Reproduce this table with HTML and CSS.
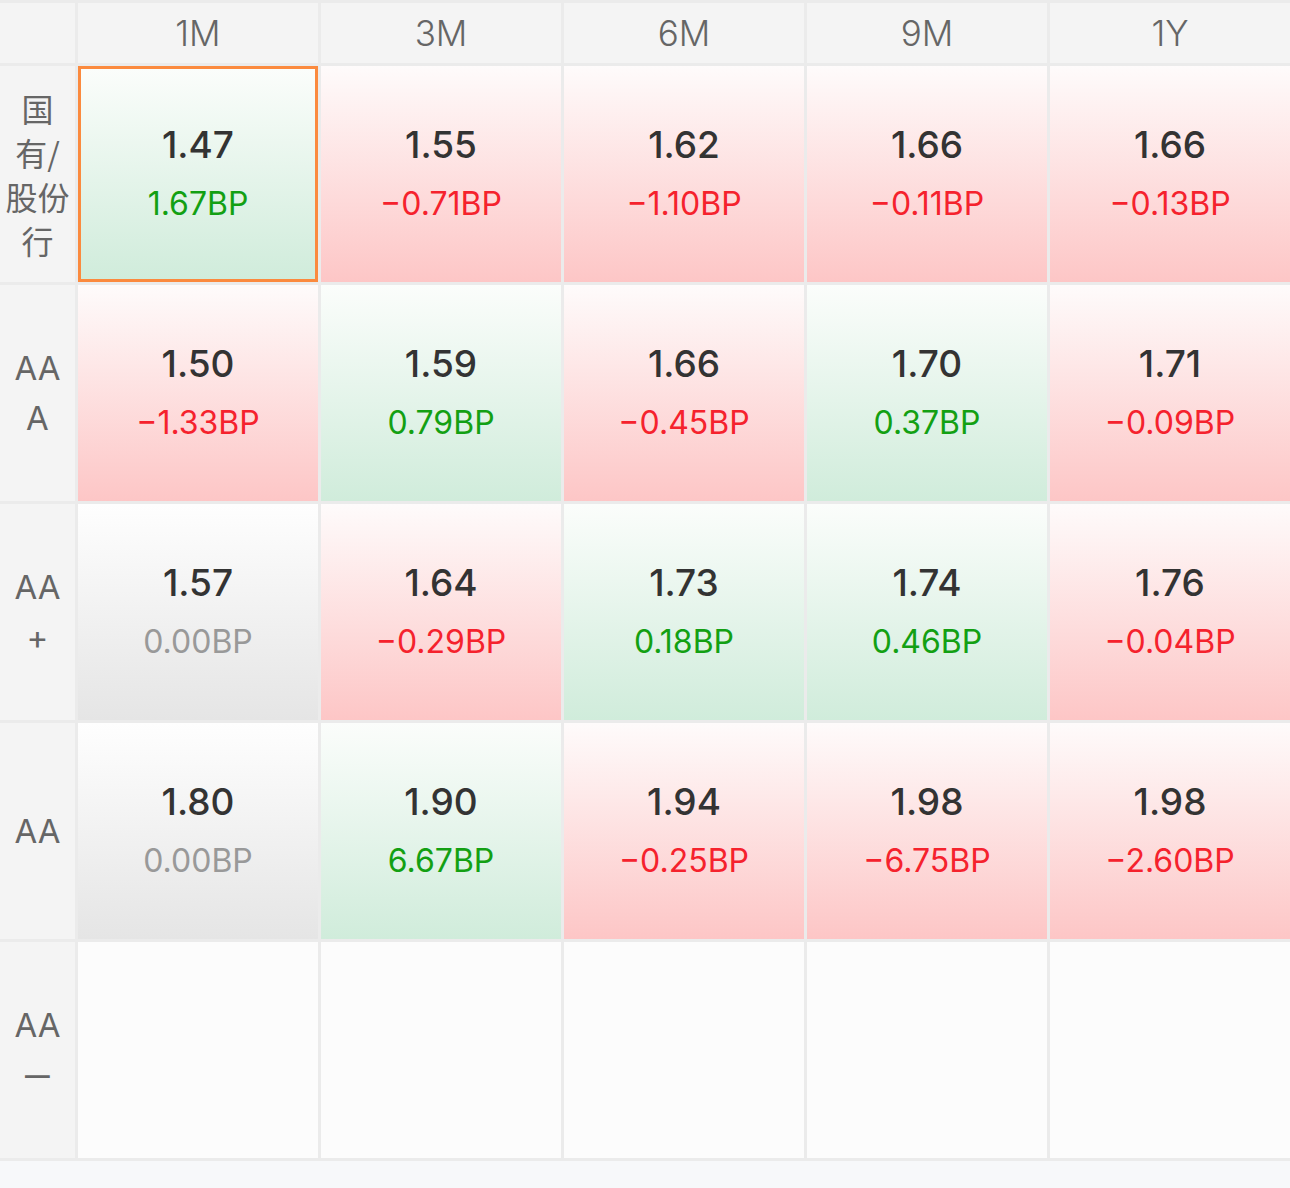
FILE: index.html
```html
<!DOCTYPE html>
<html lang="zh-CN">
<head>
    <meta charset="UTF-8">
    <meta name="viewport" content="width=device-width, initial-scale=1.0">
    <link rel="stylesheet" href="styles.css">
</head>
<body>
    <div class="matrix">
        <div class="corner"></div>
        <div class="head">1M</div>
        <div class="head">3M</div>
        <div class="head">6M</div>
        <div class="head">9M</div>
        <div class="head">1Y</div>

        <div class="label cjk"><div>国<br>有/<br>股份<br>行</div></div>
        <div class="cell up selected"><span class="rate">1.47</span><span class="bp green">1.67BP</span></div>
        <div class="cell down"><span class="rate">1.55</span><span class="bp red">−0.71BP</span></div>
        <div class="cell down"><span class="rate">1.62</span><span class="bp red">−1.10BP</span></div>
        <div class="cell down"><span class="rate">1.66</span><span class="bp red">−0.11BP</span></div>
        <div class="cell down"><span class="rate">1.66</span><span class="bp red">−0.13BP</span></div>

        <div class="label"><div>AA<br>A</div></div>
        <div class="cell down"><span class="rate">1.50</span><span class="bp red">−1.33BP</span></div>
        <div class="cell up"><span class="rate">1.59</span><span class="bp green">0.79BP</span></div>
        <div class="cell down"><span class="rate">1.66</span><span class="bp red">−0.45BP</span></div>
        <div class="cell up"><span class="rate">1.70</span><span class="bp green">0.37BP</span></div>
        <div class="cell down"><span class="rate">1.71</span><span class="bp red">−0.09BP</span></div>

        <div class="label"><div>AA<br>+</div></div>
        <div class="cell flat"><span class="rate">1.57</span><span class="bp gray">0.00BP</span></div>
        <div class="cell down"><span class="rate">1.64</span><span class="bp red">−0.29BP</span></div>
        <div class="cell up"><span class="rate">1.73</span><span class="bp green">0.18BP</span></div>
        <div class="cell up"><span class="rate">1.74</span><span class="bp green">0.46BP</span></div>
        <div class="cell down"><span class="rate">1.76</span><span class="bp red">−0.04BP</span></div>

        <div class="label"><div>AA</div></div>
        <div class="cell flat"><span class="rate">1.80</span><span class="bp gray">0.00BP</span></div>
        <div class="cell up"><span class="rate">1.90</span><span class="bp green">6.67BP</span></div>
        <div class="cell down"><span class="rate">1.94</span><span class="bp red">−0.25BP</span></div>
        <div class="cell down"><span class="rate">1.98</span><span class="bp red">−6.75BP</span></div>
        <div class="cell down"><span class="rate">1.98</span><span class="bp red">−2.60BP</span></div>

        <div class="label"><div>AA<br><span class="dash">–</span></div></div>
        <div class="cell empty"></div>
        <div class="cell empty"></div>
        <div class="cell empty"></div>
        <div class="cell empty"></div>
        <div class="cell empty"></div>
    </div>
</body>
</html>
```

FILE: styles.css
```css
body {
    margin: 0;
    background-color: #f7f8fa;
    font-family: Inter, "Liberation Sans", "Noto Sans CJK SC", sans-serif;
}
.matrix {
    display: grid;
    grid-template-columns: 75px repeat(5, 240px);
    grid-template-rows: 60px repeat(5, 216px);
    gap: 3px;
    padding: 3px 0;
    background-color: #ebebeb;
}
.corner,
.head {
    background-color: #f4f4f4;
}
.head {
    display: flex;
    align-items: center;
    justify-content: center;
    font-size: 35px;
    font-weight: 300;
    color: #666;
}
.label {
    display: flex;
    align-items: center;
    justify-content: center;
    text-align: center;
    background-color: #f4f4f4;
    color: #666;
    font-size: 33px;
    font-weight: 400;
    line-height: 50px;
}
.label.cjk {
    font-family: "Noto Sans CJK SC", sans-serif;
    font-size: 32px;
    line-height: 44px;
}
.dash {
    display: inline-block;
    transform: scaleX(1.5);
}
.cell {
    display: flex;
    flex-direction: column;
    align-items: center;
    justify-content: center;
    box-sizing: border-box;
}
.up {
    background: linear-gradient(#fbfdfb, #d0ecdb);
}
.down {
    background: linear-gradient(#fefbfb, #fdc6c6);
}
.flat {
    background: linear-gradient(#fefefe, #e5e5e5);
}
.empty {
    background-color: #fcfcfc;
}
.selected {
    border: 3px solid #fb8a3e;
}
.rate {
    font-size: 37px;
    font-weight: 500;
    color: #333;
    line-height: 59px;
}
.bp {
    font-size: 32px;
    font-weight: 400;
    line-height: 59px;
}
.red {
    color: #f5222d;
}
.green {
    color: #13a013;
}
.gray {
    color: #999;
}
```
